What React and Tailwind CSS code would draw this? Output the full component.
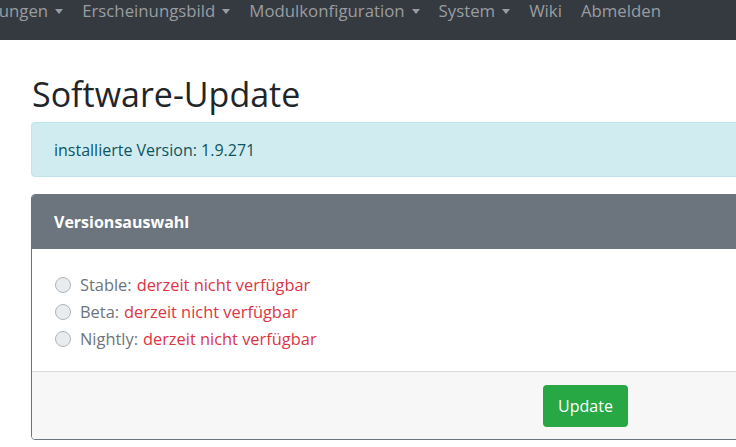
import React from 'react';

const NAV_ITEMS = [
  { label: 'Einstellungen', caret: true },
  { label: 'Erscheinungsbild', caret: true },
  { label: 'Modulkonfiguration', caret: true },
  { label: 'System', caret: true },
  { label: 'Wiki', caret: false },
  { label: 'Abmelden', caret: false },
];

const CHANNELS = ['Stable', 'Beta', 'Nightly'];

function Caret() {
  return (
    <span className="ml-[7px] inline-block h-0 w-0 border-x-[4.5px] border-t-[5px] border-x-transparent border-t-[#9a9da0] align-middle" />
  );
}

export default function App() {
  return (
    <div
      className="h-[447px] w-[736px] overflow-hidden bg-white text-[#212529]"
      style={{ fontFamily: '"Open Sans", "Noto Sans", sans-serif' }}
    >
      <nav className="flex h-[40px] items-start bg-[#343a40]">
        <ul className="ml-[-57px] flex gap-[19px] whitespace-nowrap text-[16.8px] leading-[22px] text-[#9a9da0]">
          {NAV_ITEMS.map((item) => (
            <li key={item.label} className="flex items-center">
              {item.label}
              {item.caret && <Caret />}
            </li>
          ))}
        </ul>
      </nav>

      <main className="pl-[31px] pt-[33px]">
        <h1 className="ml-[1px] mb-[6px] text-[34px] leading-[43px] font-normal text-[#212529]">
          Software-Update
        </h1>

        <div className="w-[1109px] rounded-[4px] border border-[#bee5eb] bg-[#d1ecf1] px-[22px] pt-[15px] pb-[14px] text-[16px] leading-[24px] text-[#0c5460]">
          installierte Version: 1.9.271
        </div>

        <section className="mt-[17px] w-[1109px] overflow-hidden rounded-[4px] border border-[#6c757d]">
          <header className="h-[54px] bg-[#6c757d] px-[22px] text-[16px] font-bold leading-[54px] text-white">
            Versionsauswahl
          </header>

          <div className="bg-white px-[23px] pt-[22px] pb-[19px]">
            {CHANNELS.map((channel) => (
              <label key={channel} className="flex items-center text-[16.4px] leading-[27px]">
                <span className="mr-[9px] inline-block h-[16px] w-[16px] rounded-full border border-[#adb5bd] bg-[#e9ecef]" />
                <span className="text-[#6c757d]">{channel}:</span>
                <span className="ml-[5px] text-[#dc3545]">derzeit nicht verfügbar</span>
              </label>
            ))}
          </div>

          <footer className="flex justify-center border-t border-[#d9d9d9] bg-[#f7f7f7] pt-[13px] pb-[12px]">
            <button
              type="button"
              className="h-[42px] w-[85px] rounded-[4px] bg-[#28a745] text-[16px] text-white"
            >
              Update
            </button>
          </footer>
        </section>
      </main>
    </div>
  );
}
